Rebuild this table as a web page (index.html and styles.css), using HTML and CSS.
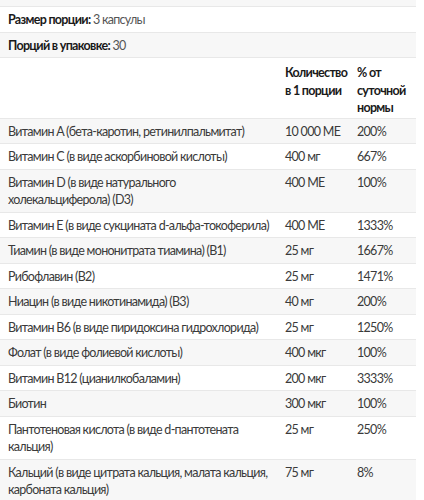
FILE: index.html
```html
<!DOCTYPE html>
<html lang="ru">
<head>
<meta charset="utf-8">
<link rel="stylesheet" href="styles.css">
</head>
<body>
<div class="facts">
  <div class="strip"></div>
  <div class="line"><b>Размер порции:</b> 3 капсулы</div>
  <div class="line gray"><b>Порций в упаковке:</b> 30</div>
  <table class="tbl">
    <colgroup><col class="c1"><col class="c2"><col class="c3"></colgroup>
    <thead>
      <tr><th></th><th>Количество<br>в 1 порции</th><th>% от<br>суточной<br>нормы</th></tr>
    </thead>
    <tbody>
      <tr class="gray"><td>Витамин A (бета-каротин, ретинилпальмитат)</td><td>10 000 МЕ</td><td>200%</td></tr>
      <tr><td>Витамин C (в виде аскорбиновой кислоты)</td><td>400 мг</td><td>667%</td></tr>
      <tr class="gray"><td>Витамин D (в виде натурального<br>холекальциферола) (D3)</td><td>400 МЕ</td><td>100%</td></tr>
      <tr><td>Витамин E (в виде сукцината d-альфа-токоферила)</td><td>400 МЕ</td><td>1333%</td></tr>
      <tr class="gray"><td>Тиамин (в виде мононитрата тиамина) (B1)</td><td>25 мг</td><td>1667%</td></tr>
      <tr><td>Рибофлавин (B2)</td><td>25 мг</td><td>1471%</td></tr>
      <tr class="gray"><td>Ниацин (в виде никотинамида) (B3)</td><td>40 мг</td><td>200%</td></tr>
      <tr><td>Витамин B6 (в виде пиридоксина гидрохлорида)</td><td>25 мг</td><td>1250%</td></tr>
      <tr class="gray"><td>Фолат (в виде фолиевой кислоты)</td><td>400 мкг</td><td>100%</td></tr>
      <tr><td>Витамин B12 (цианилкобаламин)</td><td>200 мкг</td><td>3333%</td></tr>
      <tr class="gray"><td>Биотин</td><td>300 мкг</td><td>100%</td></tr>
      <tr><td>Пантотеновая кислота (в виде d-пантотената<br>кальция)</td><td>25 мг</td><td>250%</td></tr>
      <tr class="gray"><td>Кальций (в виде цитрата кальция, малата кальция,<br>карбоната кальция)</td><td>75 мг</td><td>8%</td></tr>
    </tbody>
  </table>
</div>
</body>
</html>
```
FILE: styles.css
```css
html, body {
  margin: 0;
  padding: 0;
  background: #ffffff;
}
.facts {
  width: 416px;
  font-family: Lato, "Liberation Sans", sans-serif;
  font-size: 12.5px;
  letter-spacing: -0.7px;
  line-height: 17.5px;
  color: #3a3a3a;
}
.strip {
  height: 6px;
  background: #f7f7f7;
  border-bottom: 1px solid #e8e8e8;
}
.line {
  padding: 4px 8px 3px;
  border-bottom: 1px solid #e8e8e8;
  color: #555;
}
.line b {
  color: #1a1a1a;
  font-weight: 700;
}
.gray {
  background: #f7f7f7;
}
.tbl {
  width: 416px;
  border-collapse: collapse;
  table-layout: fixed;
}
.c1 { width: 277px; }
.c2 { width: 72px; }
.c3 { width: 67px; }
.tbl th, .tbl td {
  padding: 4px 0 3px 8px;
  text-align: left;
  vertical-align: top;
  white-space: nowrap;
  border-bottom: 1px solid #e8e8e8;
}
.tbl th {
  font-weight: 700;
  color: #1a1a1a;
  padding-top: 6px;
  padding-bottom: 1px;
}
```
